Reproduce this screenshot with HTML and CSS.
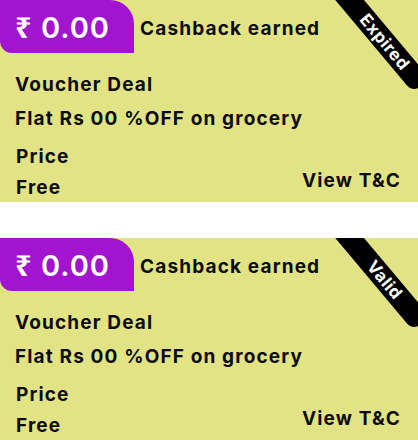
FILE: index.html
```html
<!DOCTYPE html>
<html lang="en">
<head>
<meta charset="utf-8">
<title>Vouchers</title>
<link rel="stylesheet" href="styles.css">
</head>
<body>
<div class="list">
  <div class="card">
    <div class="head">
      <div class="badge"><span class="rupee">₹</span> 0.00</div>
      <div class="earned">Cashback earned</div>
    </div>
    <div class="title">Voucher Deal</div>
    <div class="desc">Flat Rs 00 %OFF on grocery</div>
    <div class="bottom">
      <div class="price">
        <div class="line price-label">Price</div>
        <div class="line price-value">Free</div>
      </div>
      <div class="tc">View T&amp;C</div>
    </div>
    <div class="ribbon">Expired</div>
  </div>
  <div class="card">
    <div class="head">
      <div class="badge"><span class="rupee">₹</span> 0.00</div>
      <div class="earned">Cashback earned</div>
    </div>
    <div class="title">Voucher Deal</div>
    <div class="desc">Flat Rs 00 %OFF on grocery</div>
    <div class="bottom">
      <div class="price">
        <div class="line price-label">Price</div>
        <div class="line price-value">Free</div>
      </div>
      <div class="tc">View T&amp;C</div>
    </div>
    <div class="ribbon">Valid</div>
  </div>
</div>
</body>
</html>
```
FILE: styles.css
```css
* { box-sizing: border-box; }
body {
  margin: 0;
  background: #ffffff;
  font-family: Inter, "Open Sans", "DejaVu Sans", sans-serif;
  font-weight: 700;
  color: #0c0c0c;
}
.list {
  display: flex;
  flex-direction: column;
  gap: 36px;
}
.card {
  position: relative;
  height: 202px;
  background: #e2e384;
  overflow: hidden;
}
.head {
  display: flex;
  align-items: center;
  height: 53px;
}
.badge {
  width: 134px;
  height: 53px;
  background: #a214d0;
  color: #ffffff;
  border-radius: 0 24px 0 12px;
  font-size: 29px;
  line-height: 53px;
  letter-spacing: 1px;
  padding-left: 15px;
  font-weight: 600;
}
.rupee {
  font-family: "Noto Sans", "DejaVu Sans", sans-serif;
  font-weight: 700;
}
.earned {
  margin-left: 6px;
  font-size: 19px;
  line-height: 24px;
  letter-spacing: 1.15px;
  padding-top: 4px;
}
.title, .desc, .line, .tc {
  font-size: 19px;
  line-height: 24px;
  letter-spacing: 1.15px;
}
.title {
  margin: 20px 0 0 15px;
}
.desc {
  margin: 10px 0 0 15px;
}
.bottom {
  display: flex;
  justify-content: space-between;
  align-items: flex-end;
  margin: 14px 0 0 16px;
}
.price {
  display: flex;
  flex-direction: column;
  gap: 7px;
}
.tc {
  margin-right: 17px;
  padding-bottom: 7px;
}
.ribbon {
  position: absolute;
  left: 313px;
  top: 24px;
  width: 132px;
  height: 22px;
  padding-left: 18px;
  background: #000000;
  color: #ffffff;
  border-radius: 9px;
  transform: rotate(50deg);
  font-size: 17px;
  line-height: 22px;
  letter-spacing: 0.6px;
  text-align: center;
}
```
